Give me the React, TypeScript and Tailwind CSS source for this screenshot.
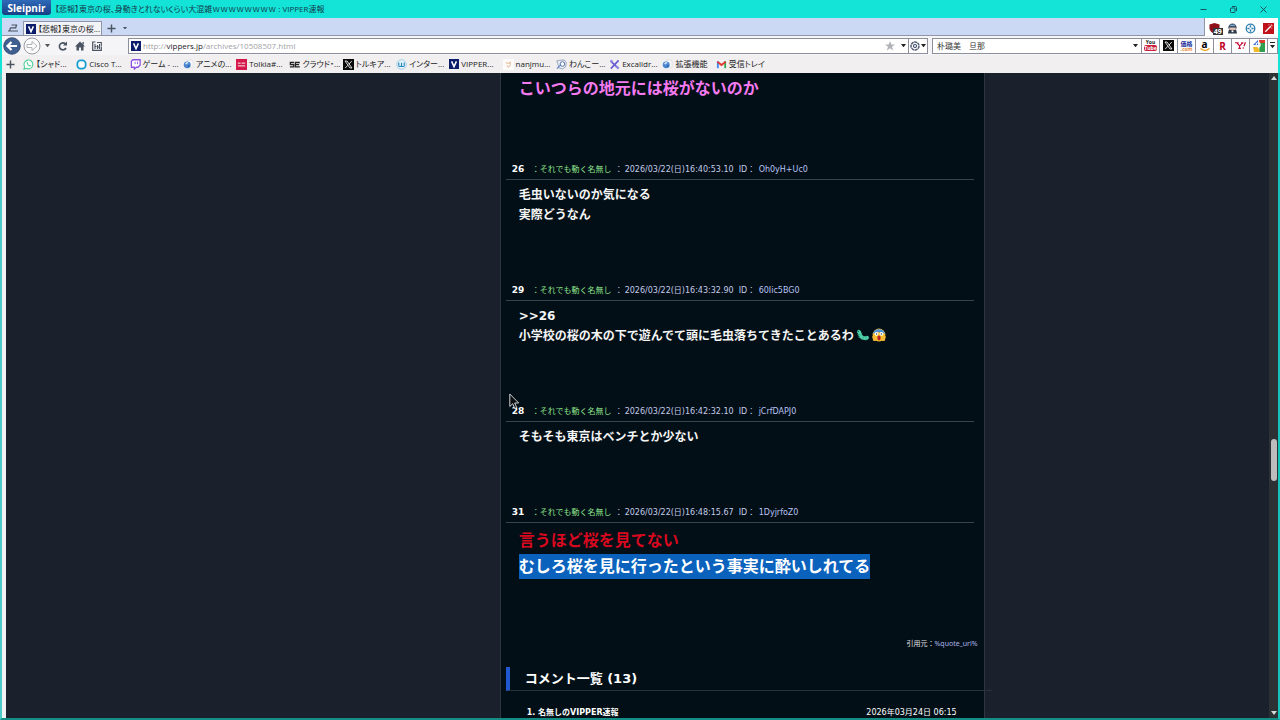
import type { ReactNode } from "react";

type Post = {
  no: number;
  date: string;
  id: string;
  body: ReactNode;
};

function VIcon() {
  return (
    <svg viewBox="0 0 10 10" className="size-[10px] shrink-0" aria-hidden>
      <rect width="10" height="10" fill="#0b1c6b" />
      <path d="M2.6 2.4 5 7.6 7.4 2.4" fill="none" stroke="#fff" strokeWidth="1.5" />
    </svg>
  );
}

function XIcon({ className = "size-[11px] shrink-0" }: { className?: string }) {
  return (
    <svg viewBox="0 0 12 12" className={className} aria-hidden>
      <rect width="12" height="12" fill="#0a0a0a" />
      <path d="M2.2 2.2h2.2l5.4 7.6H7.6z" fill="none" stroke="#fff" strokeWidth="0.9" />
      <path d="m9.6 2.2-3.2 3.6M5.4 6.8 2.4 9.9" stroke="#fff" strokeWidth="0.9" />
    </svg>
  );
}

function GlobeIcon() {
  return (
    <svg viewBox="0 0 12 12" className="size-[11px] shrink-0" aria-hidden>
      <path d="M5 1h5l1 2v6H5z" fill="#f8f8fa" stroke="#d4d6dc" strokeWidth="0.6" />
      <circle cx="4.6" cy="6.4" r="3.8" fill="#4b86cf" />
      <path d="M2.2 5c1-2 3-2.2 4-1.2-.5 1.4-2 1-2.2 2.4z" fill="#cfe3fa" />
      <path d="M5 7.5 7.5 6.5 6.5 9z" fill="#2455a0" />
    </svg>
  );
}

function Caret({ className = "w-[5px]" }: { className?: string }) {
  return (
    <svg viewBox="0 0 6 4" className={className} aria-hidden>
      <path d="M0 0h6L3 4z" fill="currentColor" />
    </svg>
  );
}

function PlusIcon() {
  return (
    <svg viewBox="0 0 10 10" className="size-[9px] shrink-0" aria-hidden>
      <path d="M5 0.5v9M0.5 5h9" stroke="#4a5361" strokeWidth="1.6" />
    </svg>
  );
}

const bookmarks: { label: string; icon: ReactNode }[] = [
  {
    label: "【シャド...",
    icon: (
      <svg viewBox="0 0 12 12" className="size-[11px] shrink-0" aria-hidden>
        <path d="M1 11l.8-2.6A4.8 4.8 0 1 1 3.7 10.2z" fill="#fff" stroke="#52cf9b" strokeWidth="1.2" />
        <path d="M4 3.8c0 2.4 1.8 4.2 4.2 4.4l.6-1.2-1.4-.8-.7.6L5.2 5.3l.6-.8-.7-1.3z" fill="#52cf9b" />
      </svg>
    ),
  },
  {
    label: "Cisco T...",
    icon: (
      <svg viewBox="0 0 12 12" className="size-[11px] shrink-0" aria-hidden>
        <rect x="1.5" y="1.5" width="9" height="9" rx="3.5" fill="#fff" stroke="#149bd0" strokeWidth="1.9" />
      </svg>
    ),
  },
  {
    label: "ゲーム - ...",
    icon: (
      <svg viewBox="0 0 12 12" className="size-[11px] shrink-0" aria-hidden>
        <path d="M3 .8h8v6L8.6 9H6.8L4.8 11V9H1.5V2.6z" fill="#fff" stroke="#8e4fe0" strokeWidth="1.4" />
        <path d="M5.6 3v2.6M8.2 3v2.6" stroke="#8e4fe0" strokeWidth="1" />
      </svg>
    ),
  },
  { label: "アニメの...", icon: <GlobeIcon /> },
  {
    label: "Tolkia#...",
    icon: (
      <svg viewBox="0 0 12 12" className="size-[11px] shrink-0" aria-hidden>
        <rect width="12" height="12" fill="#d51a4b" />
        <path d="M2 4.5h3M6 4.5h4M2 7.5h8" stroke="#fff" strokeWidth="1" />
      </svg>
    ),
  },
  {
    label: "クラウド・...",
    icon: (
      <svg viewBox="0 0 12 12" className="size-[11px] shrink-0" aria-hidden>
        <path d="M5.5 3.8H1.5v2.3h3.7v2.4H1" fill="none" stroke="#222" strokeWidth="1.4" />
        <path d="M11.8 3.8H7v4.7h4.8M7 6.1h4" fill="none" stroke="#222" strokeWidth="1.4" />
      </svg>
    ),
  },
  { label: "トルキア...", icon: <XIcon /> },
  {
    label: "インター...",
    icon: (
      <svg viewBox="0 0 12 12" className="size-[11px] shrink-0" aria-hidden>
        <circle cx="6" cy="6" r="5.2" fill="#e4f3fa" stroke="#8dc3e0" strokeWidth="0.8" />
        <path d="M3 3.8v3.2c0 1.6 3 1.6 3 0V4v3c0 1.6 3 1.6 3 0V3.8" fill="none" stroke="#2387bd" strokeWidth="1.2" />
      </svg>
    ),
  },
  { label: "VIPPER...", icon: <VIcon /> },
  {
    label: "nanjmu...",
    icon: (
      <svg viewBox="0 0 12 12" className="size-[11px] shrink-0" aria-hidden>
        <rect width="12" height="12" fill="#fdfcfa" />
        <path d="M3 3.5 5 5l3-1.5v3L6 9 4 7" fill="none" stroke="#e9c7a9" strokeWidth="1.2" />
      </svg>
    ),
  },
  {
    label: "わんこー...",
    icon: (
      <svg viewBox="0 0 12 12" className="size-[11px] shrink-0" aria-hidden>
        <path d="M.8 2 4 1.5 9 1l2.2 3-.7 4.5L7 11 3 9.5 2 5z" fill="#e9eef6" stroke="#7d8ea8" strokeWidth="0.8" />
        <circle cx="7" cy="5.5" r="2.5" fill="#fff" stroke="#3d5f9a" strokeWidth="0.9" />
        <path d="M1 10.5 5.5 6" stroke="#4e79be" strokeWidth="1.1" />
      </svg>
    ),
  },
  {
    label: "Excalidr...",
    icon: (
      <svg viewBox="0 0 12 12" className="size-[11px] shrink-0" aria-hidden>
        <path d="M2 2.5 10 10M10.5 1.5 2 10.5" stroke="#6a5fd0" strokeWidth="1.9" />
        <path d="M1.5 1.5 4 3.5M8 8l2.5 2.5" stroke="#8f86e6" strokeWidth="2.4" />
      </svg>
    ),
  },
  { label: "拡張機能", icon: <GlobeIcon /> },
  {
    label: "受信トレイ",
    icon: (
      <svg viewBox="0 0 12 12" className="size-[11px] shrink-0" aria-hidden>
        <path d="M1 2.5h2V10H1z" fill="#4285f4" />
        <path d="M9 2.5h2V10H9z" fill="#34a853" />
        <path d="M1.5 3 6 6.6 10.5 3" fill="none" stroke="#e03a30" strokeWidth="2" />
      </svg>
    ),
  },
];

const searchEngines: { name: string; icon: ReactNode }[] = [
  {
    name: "YouTube",
    icon: (
      <span className="flex flex-col items-center text-[5px] leading-[5px] font-bold text-[#222]">
        You
        <span className="rounded-[2px] bg-[#c8203c] text-[5px] leading-[6px] text-white">Tube</span>
      </span>
    ),
  },
  { name: "X", icon: <XIcon /> },
  {
    name: "価格.com",
    icon: (
      <span className="flex flex-col items-center text-[6px] leading-[6px] font-bold text-[#1c2f9c]">
        価格
        <span className="text-[5px] leading-[4px] text-[#e58a3c]">.com</span>
      </span>
    ),
  },
  {
    name: "Amazon",
    icon: (
      <span className="flex flex-col items-center text-[10px] leading-[8px] font-bold text-black">
        a
        <svg viewBox="0 0 10 3" className="h-[3px] w-[10px]" aria-hidden>
          <path d="M.5.5c3 2.4 6 2.4 9 0" fill="none" stroke="#f0a020" strokeWidth="1.3" />
        </svg>
      </span>
    ),
  },
  { name: "楽天", icon: <span className="text-[10px] leading-[10px] font-bold text-[#bf0022]">R</span> },
  {
    name: "Yahoo!",
    icon: (
      <svg viewBox="0 0 12 12" className="size-[11px]" aria-hidden>
        <path d="M0 3h4M2 3l3 3.4L8 3.4M6.6 3.2h2.6M5 6v3M3.5 9.2h3" fill="none" stroke="#c4123a" strokeWidth="1.3" />
        <path d="M11.4 2.4 9.8 6.8" stroke="#c4123a" strokeWidth="1.3" />
        <circle cx="9" cy="8.8" r="0.8" fill="#c4123a" />
      </svg>
    ),
  },
  {
    name: "Google",
    icon: (
      <svg viewBox="0 0 12 12" className="size-[12px]" aria-hidden>
        <rect width="12" height="12" rx="1" fill="#fff" />
        <path d="M6 0h6v5H7z" fill="#d93a2b" />
        <path d="M7 3h5v9H6z" fill="#2f9e4f" />
        <path d="M0 5 5 0v5z" fill="#3b6fd6" />
        <path d="M0 7h5l2 5H1z" fill="#f2b92c" />
        <circle cx="5.2" cy="4.8" r="2" fill="none" stroke="#fff" strokeWidth="1.1" />
      </svg>
    ),
  },
];

function BugEmoji() {
  return (
    <svg viewBox="0 0 16 16" className="ml-px inline-block size-4 align-[-3px]" role="img" aria-label="毛虫">
      <path d="M3.8 4.8c1.400 1 .8 3 2.200 4.800 1.400 1.600 3.600 1.800 6 1.200" fill="none" stroke="#4fd0a8" strokeWidth="3.800" strokeLinecap="round" />
      <path d="M2.500 7.500h2M3.500 10.500l1.500-1M7 13l.6-1.500M11 13.500v-1.300" stroke="#23907a" strokeWidth="0.900" />
      <path d="M6.500 7.500 5 8.500M9 9.300 8.200 11M11.200 9.200l-.2 2" stroke="#2fa98a" strokeWidth="0.700" />
      <circle cx="3.200" cy="4.400" r="0.600" fill="#12483d" />
    </svg>
  );
}

function ScreamEmoji() {
  return (
    <svg viewBox="0 0 16 16" className="inline-block size-4 align-[-3px]" role="img" aria-label="叫ぶ顔">
      <circle cx="8" cy="8" r="6.400" fill="#fbc02d" />
      <path d="M1.800 7a6.400 6.400 0 0 1 12.400 0C11 4.800 5 4.800 1.800 7z" fill="#4a90dc" />
      <circle cx="5.500" cy="6.800" r="1.900" fill="#fff" />
      <circle cx="10.500" cy="6.800" r="1.900" fill="#fff" />
      <circle cx="5.600" cy="6.900" r="0.700" fill="#333" />
      <circle cx="10.400" cy="6.900" r="0.700" fill="#333" />
      <ellipse cx="8" cy="11" rx="1.700" ry="2.400" fill="#b3202a" />
      <path d="M1 9.500c1.500-1 3.500.5 4 4.500H2.400zM15 9.500c-1.500-1-3.500.5-4 4.500h2.600z" fill="#f7b53a" />
    </svg>
  );
}

const posts: Post[] = [
  {
    no: 26,
    date: "2026/03/22(日)16:40:53.10",
    id: "Oh0yH+Uc0",
    body: (
      <>
        毛虫いないのか気になる
        <br />
        実際どうなん
      </>
    ),
  },
  {
    no: 29,
    date: "2026/03/22(日)16:43:32.90",
    id: "60Iic5BG0",
    body: (
      <>
        &gt;&gt;26
        <br />
        小学校の桜の木の下で遊んでて頭に毛虫落ちてきたことあるわ
        <BugEmoji />
        <ScreamEmoji />
      </>
    ),
  },
  {
    no: 28,
    date: "2026/03/22(日)16:42:32.10",
    id: "jCrfDAPJ0",
    body: "そもそも東京はベンチとか少ない",
  },
  {
    no: 31,
    date: "2026/03/22(日)16:48:15.67",
    id: "1DyjrfoZ0",
    body: (
      <div className="text-base leading-[26px]">
        <span className="text-[#d8091f]">言うほど桜を見てない</span>
        <br />
        <span className="inline-block bg-[#0b62bd] leading-[25px] text-white">むしろ桜を見に行ったという事実に酔いしれてる</span>
      </div>
    ),
  },
];

function PostItem({ post }: { post: Post }) {
  return (
    <article className="mb-[57px]">
      <header className="mr-[10px] ml-[5px] flex h-[19px] items-center border-b border-[#3a424b] pl-[6px] text-[8px] whitespace-nowrap text-[#c5cbe8]">
        <span className="w-[20px] text-[9px] font-bold text-white">{post.no}</span>
        <span className="w-[8px] text-[#8fe28b]">：</span>
        <span className="w-[75px] text-[#8fe28b]">それでも動く名無し</span>
        <span className="w-[10px]">：</span>
        <time className="w-[114px]">{post.date}</time>
        <span className="w-[20px]">ID：</span>
        <a href="#" className="text-[#b9c2f2]">
          {post.id}
        </a>
      </header>
      <div className="pt-[5px] pl-[18px] text-xs leading-5 font-bold whitespace-nowrap text-[#f4f4f4]">{post.body}</div>
    </article>
  );
}

function TitleBar() {
  return (
    <div className="flex h-[18px] shrink-0 items-center bg-[#14e3d8] text-[8px] text-[#123c4c]">
      <button
        type="button"
        className="ml-[2px] h-[15px] w-[49px] self-start rounded-b-[3px] bg-gradient-to-b from-[#2f6ab8] to-[#173f85] text-[10px] leading-[14px] font-bold text-white"
      >
        Sleipnir
      </button>
      <h1 className="ml-[4px] flex-1 [font-feature-settings:'palt']">【悲報】東京の桜、身動きとれないくらい大混雑ｗｗｗｗｗｗｗｗ : VIPPER速報</h1>
      <div className="flex items-center gap-[21px] pr-[12px]">
        <button type="button" aria-label="最小化">
          <svg viewBox="0 0 9 9" className="size-[9px]" aria-hidden>
            <path d="M1.5 4.5h6" stroke="#15545c" />
          </svg>
        </button>
        <button type="button" aria-label="元に戻す">
          <svg viewBox="0 0 9 9" className="size-[9px]" fill="none" stroke="#15545c" aria-hidden>
            <rect x="1.5" y="3" width="4.5" height="4.5" rx="0.8" />
            <path d="M3 1.5h3.5a1 1 0 0 1 1 1V6" />
          </svg>
        </button>
        <button type="button" aria-label="閉じる">
          <svg viewBox="0 0 9 9" className="size-[9px]" aria-hidden>
            <path d="m1.5 1.5 6 6M7.5 1.5l-6 6" stroke="#15545c" />
          </svg>
        </button>
      </div>
    </div>
  );
}

function TabBar() {
  return (
    <div className="flex h-[18px] bg-white">
      <div className="flex flex-1 items-end border-r border-b border-[#9096a6] bg-[#cbd9f5]">
        <button type="button" aria-label="タブ一覧" className="flex h-[14px] w-[21px] items-center justify-center">
          <svg viewBox="0 0 10 8" className="w-[10px]" aria-hidden>
            <path d="M3.5 1h5L7.500 4.500M2.500 3.800h5.500M0 7h10M2.500 3.800 1.500 7" fill="none" stroke="#4a5361" strokeWidth="1.200" />
          </svg>
        </button>
        <button
          type="button"
          className="flex h-[14px] w-[79px] items-center gap-[2px] border border-b-0 border-[#9096a6] bg-[#f2f3f7] pl-[2px] text-[8px] whitespace-nowrap text-[#222] [font-feature-settings:'palt']"
        >
          <VIcon />
          【悲報】東京の桜...
        </button>
        <button type="button" aria-label="新しいタブ" className="flex h-[14px] w-[18px] items-center justify-center">
          <PlusIcon />
        </button>
        <button type="button" aria-label="タブメニュー" className="flex h-[14px] w-[10px] items-center justify-center text-[#4a5361]">
          <Caret className="w-[4px]" />
        </button>
      </div>
      <div className="flex w-[73px] items-center justify-around pt-[2px]">
        <button type="button" aria-label="uBlock" className="relative">
          <svg viewBox="0 0 12 12" className="size-[11px]" aria-hidden>
            <path d="M6 0 11.5 1.5v4.5C11 9 8 11 6 12 4 11 1 9 .5 6V1.500z" fill="#8f1018" />
          </svg>
          <span className="absolute top-[5px] left-[4px] bg-[#333] px-px text-[7px] leading-[7px] font-bold text-white">49</span>
        </button>
        <button type="button" aria-label="拡張機能 1">
          <svg viewBox="0 0 12 12" className="size-[11px]" aria-hidden>
            <circle cx="6" cy="5" r="4.500" fill="#3d4c63" />
            <path d="M2.500 5h7v2.500h-7z" fill="#e8c8b8" />
            <path d="M3.500 2.500h5" stroke="#7fc4ea" strokeWidth="1.200" />
            <path d="M2 7.500h8l1 4H1z" fill="#30394a" />
            <path d="M5 8h2v2H5z" fill="#fff" />
          </svg>
        </button>
        <button type="button" aria-label="拡張機能 2">
          <svg viewBox="0 0 12 12" className="size-[11px]" aria-hidden>
            <circle cx="6" cy="6" r="4.700" fill="#fff" stroke="#2d7fae" strokeWidth="1.400" />
            <path d="M6 2.500v7M2.500 6h7" stroke="#2d7fae" strokeWidth="1.600" strokeDasharray="2.400 2.200" />
          </svg>
        </button>
        <button type="button" aria-label="拡張機能 3">
          <svg viewBox="0 0 12 12" className="size-[11px]" aria-hidden>
            <rect width="12" height="12" fill="#c01119" />
            <path d="M2.500 9.500 8.500 3.500" stroke="#fff" strokeWidth="1.400" />
            <path d="M9 1.500v1.500h1.500M6 2h1M9.500 6v-1" stroke="#fff" strokeWidth="0.800" fill="none" />
          </svg>
        </button>
      </div>
    </div>
  );
}

function AddressBar() {
  return (
    <div className="flex h-[19px] items-center bg-[#f5f5f7] text-[8px]">
      <div className="flex w-[126px] shrink-0 items-center pl-[1px]">
        <button type="button" aria-label="戻る">
          <svg viewBox="0 0 18 18" className="size-[18px]" aria-hidden>
            <circle cx="9" cy="9" r="8.300" fill="#3f5f91" stroke="#2c4269" strokeWidth="0.800" />
            <path d="M14 9H5M8.500 5 4.500 9l4 4" fill="none" stroke="#fff" strokeWidth="2.200" />
          </svg>
        </button>
        <button type="button" aria-label="進む" className="ml-[2px]">
          <svg viewBox="0 0 18 18" className="size-[18px]" aria-hidden>
            <circle cx="9" cy="9" r="8" fill="#fbfbfc" stroke="#9a9ca2" />
            <path d="M4 7.500h5V4.500L14 9l-5 4.500v-3H4z" fill="#fff" stroke="#a6a8ae" strokeWidth="0.900" />
          </svg>
        </button>
        <button type="button" aria-label="履歴" className="ml-[4px] text-[#555]">
          <Caret />
        </button>
        <div className="ml-[8px] flex gap-[7px]">
          <button type="button" aria-label="再読み込み">
            <svg viewBox="0 0 10 10" className="size-[10px]" aria-hidden>
              <path d="M8 7a3.500 3.500 0 1 1-.5-4" fill="none" stroke="#4a5361" strokeWidth="1.600" />
              <path d="M9 .5v4H5z" fill="#4a5361" />
            </svg>
          </button>
          <button type="button" aria-label="ホーム">
            <svg viewBox="0 0 10 10" className="size-[10px]" aria-hidden>
              <path d="M5 .5 10 5.500H8.500V9.500H6V6.500H4v3H1.500v-4H0zM7.500 1h1.300v2.500H7.500z" fill="#4a5361" />
            </svg>
          </button>
          <button type="button" aria-label="お気に入り">
            <svg viewBox="0 0 10 10" className="size-[10px]" aria-hidden>
              <path d="M3.500 1H.700v8.300h8.600V5.500" fill="none" stroke="#4a5361" strokeWidth="1.200" />
              <path d="M3 3v5M3 5.500h1.500M5.500 4v4M5.500 6h2M7.500 3v5M5 1.500h4.300V5" fill="none" stroke="#4a5361" strokeWidth="1.100" />
            </svg>
          </button>
        </div>
      </div>
      <div className="flex h-[16px] flex-1 items-center border border-[#8d909c] bg-white pl-[2px]">
        <VIcon />
        <div className="ml-[2px] grid flex-1 items-center">
          <input
            aria-label="アドレス"
            type="url"
            defaultValue="http://vippers.jp/archives/10508507.html"
            className="col-start-1 row-start-1 w-full text-transparent caret-black outline-none"
          />
          <span aria-hidden className="pointer-events-none col-start-1 row-start-1 text-[#a2a2a6]">
            http://<span className="text-[#222]">vippers.jp</span>/archives/10508507.html
          </span>
        </div>
        <button type="button" aria-label="お気に入りに追加">
          <svg viewBox="0 0 10 10" className="size-[10px]" aria-hidden>
            <path d="m5 0 1.300 3.500H10L7 5.800 8.200 9.500 5 7.200 1.800 9.500 3 5.800 0 3.500h3.700z" fill="#b0b2b8" />
          </svg>
        </button>
        <button type="button" aria-label="アドレス履歴" className="mr-[2px] ml-[6px] text-[#222]">
          <Caret />
        </button>
        <button type="button" aria-label="エンジン切り替え" className="flex h-full items-center gap-px border-l border-[#8d909c] px-px text-[#222]">
          <svg viewBox="0 0 10 10" className="size-[10px]" aria-hidden>
            <circle cx="5" cy="5" r="4" fill="none" stroke="#535c74" strokeWidth="1.500" strokeDasharray="3 0.500" />
            <circle cx="5" cy="5" r="1.700" fill="#c9d2e4" stroke="#535c74" strokeWidth="1" />
          </svg>
          <Caret />
        </button>
      </div>
      <div className="ml-[4px] flex h-[16px] w-[346px] shrink-0 items-center border border-[#8d909c] bg-white">
        <input aria-label="検索" type="text" defaultValue="朴璐美　旦那" className="min-w-0 flex-1 pl-[4px] text-[#333] outline-none" />
        <button type="button" aria-label="検索履歴" className="mr-[3px] text-[#222]">
          <Caret />
        </button>
        {searchEngines.map((engine) => (
          <button
            key={engine.name}
            type="button"
            aria-label={engine.name}
            className="flex h-full w-[18px] items-center justify-center border-l border-[#8d909c]"
          >
            {engine.icon}
          </button>
        ))}
        <button type="button" aria-label="検索エンジン一覧" className="flex h-full w-[10px] flex-col items-center justify-center gap-[2px] border-l border-[#8d909c] text-[#222]">
          <span className="h-px w-[5px] bg-[#222]" />
          <Caret />
        </button>
      </div>
    </div>
  );
}

function BookmarkBar() {
  return (
    <nav aria-label="ブックマーク" className="flex h-[18px] items-center bg-[#f1eff0] pl-[4px] text-[8px] text-[#222]">
      <button type="button" aria-label="ブックマークを追加" className="w-[17px]">
        <PlusIcon />
      </button>
      <div className="grid w-[746px] grid-cols-14 [font-feature-settings:'palt']">
        {bookmarks.map((b) => (
          <a key={b.label} href="#" className="flex items-center gap-[2px] whitespace-nowrap">
            {b.icon}
            {b.label}
          </a>
        ))}
      </div>
    </nav>
  );
}

function Scrollbar() {
  return (
    <div className="flex w-[9px] shrink-0 flex-col items-center bg-[#2c3233] py-[3px] text-[#d6d6d6]">
      <Caret className="w-[6px] rotate-180" />
      <div className="flex-[358]" />
      <div className="h-[42px] w-[6px] rounded-full bg-[#bdbdbd]" />
      <div className="flex-[229]" />
      <Caret className="w-[6px]" />
    </div>
  );
}

function MousePointer() {
  return (
    <svg viewBox="0 0 12 18" className="absolute top-[320px] left-[8px] h-[18px] w-[12px]" aria-hidden>
      <path d="M.8 1v12.500l2.900-2.800 2 4.800 2-.9-2-4.600h4z" fill="#0a0f14" stroke="#e6e6e6" strokeWidth="0.900" />
    </svg>
  );
}

export default function App() {
  return (
    <div className="flex h-screen flex-col overflow-hidden bg-[#14e3d8] font-['Open_Sans','Noto_Sans_CJK_JP',sans-serif]">
      <TitleBar />
      <div className="mr-[2px] ml-[2px] shrink-0">
        <TabBar />
        <AddressBar />
        <BookmarkBar />
      </div>
      <div className="flex min-h-0 flex-1 border-r-2 border-b-2 border-l-2 border-r-[#14c3bc] border-b-[#138d86] border-l-[#4ccbc9]">
        <div className="w-[4px] shrink-0 bg-[#f1f1f3]" />
        <div className="flex min-w-0 flex-1 overflow-hidden bg-[#1b212c]">
          <div className="flex-[493]" />
          <main className="relative w-[485px] shrink-0 border-x border-[#303641] bg-[#020f17] font-['DejaVu_Sans','Noto_Sans_CJK_JP',sans-serif] text-white">
            <p className="mb-[59px] pt-[3px] pl-[18px] text-base leading-[26px] font-bold text-[#f57af0]">こいつらの地元には桜がないのか</p>
            {posts.map((post) => (
              <PostItem key={post.no} post={post} />
            ))}
            <p className="pt-px pr-[6px] text-right font-['Noto_Sans','Noto_Sans_CJK_JP',sans-serif] text-[7px] leading-3 text-[#e2e2e2]">
              引用元：
              <a href="#" className="text-[#a9b4ea]">
                %quote_url%
              </a>
            </p>
            <h2 className="mt-[17px] -mr-[8px] ml-[5px] border-b border-l-4 border-b-[#2b3138] border-l-[#1f58cf] pl-[15px] text-[13px] leading-[23px] font-bold">
              コメント一覧 (13)
            </h2>
            <div className="mt-[14px] flex justify-between pr-[27px] pl-[26px] text-[8px] leading-4">
              <b>1. 名無しのVIPPER速報</b>
              <time>2026年03月24日 06:15</time>
            </div>
            <MousePointer />
          </main>
          <div className="flex-[284]" />
        </div>
        <Scrollbar />
      </div>
    </div>
  );
}
